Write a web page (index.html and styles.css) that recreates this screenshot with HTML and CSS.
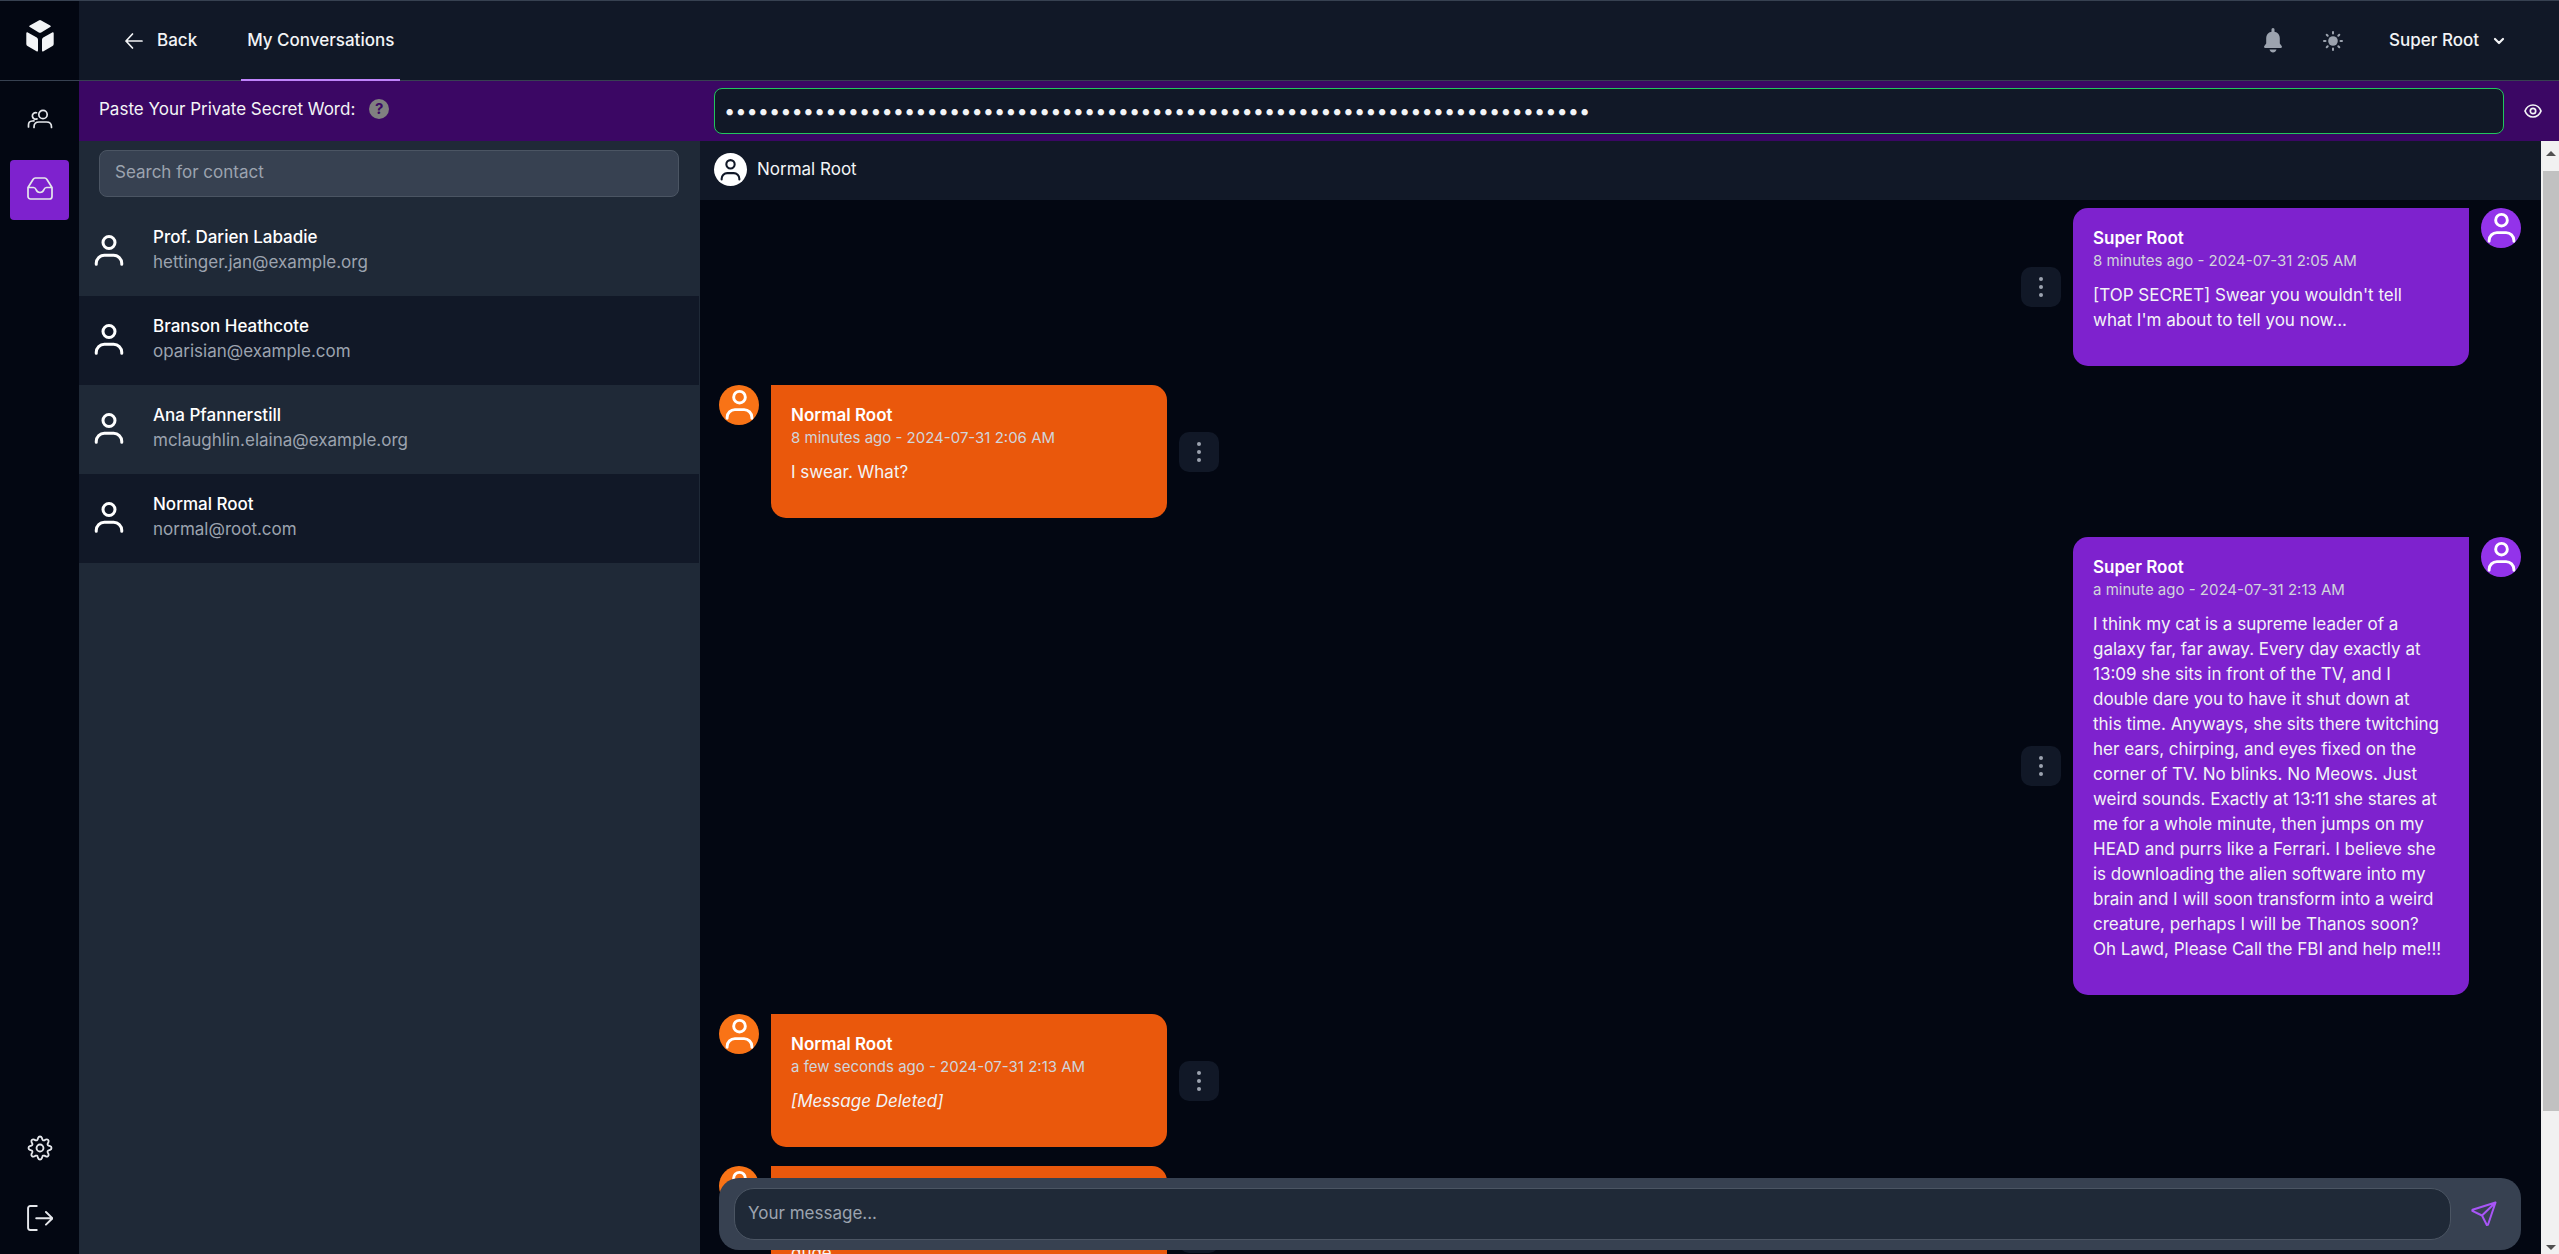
FILE: index.html
```html
<!DOCTYPE html>
<html lang="en">
<head>
<meta charset="utf-8">
<title>My Conversations</title>
<link rel="stylesheet" href="styles.css">
</head>
<body>
<svg class="sprite" aria-hidden="true">
  <symbol id="person" viewBox="0 0 24 24"><g fill="none" stroke="currentColor" stroke-width="2" stroke-linecap="round"><circle cx="12" cy="7" r="4"/><path d="M3.5 21.5v-.6A5.400 5.400 0 0 1 9 15.500h6a5.400 5.400 0 0 1 5.500 5.400v.6"/></g></symbol>
  <symbol id="dots" viewBox="0 0 24 24"><g fill="currentColor"><circle cx="12" cy="4" r="2"/><circle cx="12" cy="12" r="2"/><circle cx="12" cy="20" r="2"/></g></symbol>
</svg>
<div class="app">
  <nav class="rail" aria-label="Main">
    <a class="logo" href="#" aria-label="Home"><svg width="28" height="32" viewBox="0 0 28 32" fill="currentColor"><path d="M12.800.4a2.400 2.400 0 0 1 2.400 0l9 5.200c.8.500.8 1 0 1.500l-9 5.300c-.8.400-1.600.400-2.400 0l-9-5.300c-.8-.500-.8-1 0-1.500zM.3 13.200c0-1 .7-1.300 1.500-.8l9 5.200c.8.500 1.200 1.200 1.200 2.100v10.600c0 1.200-.7 1.500-1.500 1L1.500 26A2.400 2.400 0 0 1 .3 24zM27.700 13.200c0-1-.7-1.300-1.500-.8l-9 5.200c-.8.500-1.200 1.200-1.200 2.100v10.600c0 1.200.7 1.500 1.500 1l9-5.300a2.400 2.400 0 0 0 1.200-2z"/></svg></a>
    <div class="rail-links">
      <a class="rail-link" href="#" aria-label="Contacts"><svg width="26" height="20" viewBox="0 0 26 20" fill="none" stroke="currentColor" stroke-width="1.700" stroke-linecap="round"><circle cx="16" cy="5.500" r="4.200"/><path d="M7 18.500V18c0-3 2-5 5-5h7.500c3 0 5 2 5 5v.5M9.500 3.700A3.300 3.300 0 1 0 10 9.900M1.500 18v-2c0-2.300 1.500-3.900 3.700-4l1.800-.1"/></svg></a>
      <a class="rail-link active" href="#" aria-label="Conversations"><svg width="26" height="23" viewBox="0 0 26 23" fill="none" stroke="currentColor" stroke-width="1.700" stroke-linejoin="round"><path d="M1 10.500v9A2.500 2.500 0 0 0 3.500 22h19a2.500 2.500 0 0 0 2.500-2.500v-9l-5.200-8.200A2.500 2.500 0 0 0 17.700 1H8.300a2.500 2.500 0 0 0-2.100 1.300zh5.500c1.500 0 2 .8 2.500 2 .7 2 1.800 3 4 3s3.300-1 4-3c.5-1.200 1-2 2.500-2H25"/></svg></a>
    </div>
    <div class="rail-links bottom">
      <a class="rail-link" href="#" aria-label="Settings"><svg width="26" height="26" viewBox="0 0 24 24" fill="none" stroke="currentColor" stroke-width="1.700" stroke-linejoin="round"><circle cx="12" cy="12" r="3.200"/><path d="M10.300 2.600a1.800 1.800 0 0 1 3.400 0l.5 1.500a1.300 1.300 0 0 0 1.800.8l1.400-.7a1.800 1.800 0 0 1 2.400 2.400l-.7 1.400a1.300 1.300 0 0 0 .8 1.800l1.500.5a1.800 1.800 0 0 1 0 3.400l-1.500.5a1.300 1.300 0 0 0-.8 1.800l.7 1.400a1.800 1.800 0 0 1-2.400 2.400l-1.400-.7a1.300 1.300 0 0 0-1.800.8l-.5 1.500a1.800 1.800 0 0 1-3.400 0l-.5-1.500a1.300 1.300 0 0 0-1.800-.8l-1.400.7a1.800 1.800 0 0 1-2.400-2.400l.7-1.400a1.300 1.300 0 0 0-.8-1.800l-1.500-.5a1.800 1.800 0 0 1 0-3.400l1.500-.5a1.300 1.300 0 0 0 .8-1.800l-.7-1.400a1.800 1.800 0 0 1 2.400-2.400l1.400.7a1.300 1.300 0 0 0 1.800-.8z"/></svg></a>
      <a class="rail-link" href="#" aria-label="Log out"><svg width="26" height="26" viewBox="0 0 24 24" fill="none" stroke="currentColor" stroke-width="1.800" stroke-linecap="round" stroke-linejoin="round"><path d="M9 1H3a2 2 0 0 0-2 2v18a2 2 0 0 0 2 2h6M8.500 12.300H23.500M17.500 6.500l6 5.800-6 5.800"/></svg></a>
    </div>
  </nav>
  <div class="main">
    <header class="topbar">
      <nav class="tabs" aria-label="Section">
        <a class="tab" href="#"><svg width="20" height="20" viewBox="0 0 20 20" fill="none" stroke="currentColor" stroke-width="1.700" stroke-linecap="round" stroke-linejoin="round"><path d="M18 10H2M8.500 3L2 10l6.500 7"/></svg>Back</a>
        <a class="tab current" href="#">My Conversations</a>
      </nav>
      <div class="tools">
        <button class="icon-btn" aria-label="Notifications"><svg width="20" height="25" viewBox="0 0 20 25" fill="currentColor"><path d="M10 0c1 0 1.500.8 1.500 1.700v2c3.500.7 5.300 3.300 5.300 6.300v5.500l1.900 2.500c.5.700.2 2-.8 2H2.100c-1 0-1.300-1.300-.8-2l1.900-2.500V10c0-3 1.800-5.600 5.300-6.300v-2C8.500.8 9 0 10 0zM6.500 21.500h7c-.5 2-2 3-3.500 3s-3-1-3.500-3z"/></svg></button>
        <button class="icon-btn" aria-label="Toggle theme"><svg width="20" height="20" viewBox="0 0 20 20" fill="none" stroke="currentColor" stroke-width="2" stroke-linecap="round"><circle cx="10" cy="10" r="4.800" fill="currentColor" stroke="none"/><path d="M10 1v1.500M10 17.500V19M1 10h1.500M17.500 10H19M3.700 3.700l1 1M15.300 15.300l1 1M3.700 16.300l1-1M15.300 4.700l1-1"/></svg></button>
        <button class="user-btn">Super Root<svg width="20" height="20" viewBox="0 0 20 20" fill="none" stroke="currentColor" stroke-width="2.200" stroke-linecap="round" stroke-linejoin="round"><path d="M6 8l4 4 4-4"/></svg></button>
      </div>
    </header>
    <form class="secret">
      <div class="secret-label"><label for="secret">Paste Your Private Secret Word:</label><span class="help">?</span></div>
      <input class="secret-input" id="secret" type="password" value="12345678901234567890123456789012345678901234567890123456789012345678901234567">
      <button class="eye" type="button" aria-label="Show secret"><svg width="18" height="14" viewBox="0 0 18 14" fill="none" stroke="currentColor" stroke-width="1.700"><path d="M1 7c1.500-3.800 4.500-6 8-6s6.500 2.200 8 6c-1.500 3.800-4.500 6-8 6s-6.500-2.200-8-6z"/><circle cx="9" cy="7" r="2.700"/></svg></button>
    </form>
    <div class="content">
      <aside class="contacts">
        <div class="search"><input class="search-input" type="text" placeholder="Search for contact" aria-label="Search for contact"></div>
        <ul class="contact-list">
          <li><a class="contact" href="#"><svg class="contact-icon"><use href="#person"/></svg><span><span class="name">Prof. Darien Labadie</span><span class="email">hettinger.jan@example.org</span></span></a></li>
          <li><a class="contact" href="#"><svg class="contact-icon"><use href="#person"/></svg><span><span class="name">Branson Heathcote</span><span class="email">oparisian@example.com</span></span></a></li>
          <li><a class="contact" href="#"><svg class="contact-icon"><use href="#person"/></svg><span><span class="name">Ana Pfannerstill</span><span class="email">mclaughlin.elaina@example.org</span></span></a></li>
          <li><a class="contact" href="#"><svg class="contact-icon"><use href="#person"/></svg><span><span class="name">Normal Root</span><span class="email">normal@root.com</span></span></a></li>
        </ul>
      </aside>
      <section class="chat">
        <header class="chat-head"><span class="peer"><svg><use href="#person"/></svg></span>Normal Root</header>
        <div class="messages">
          <article class="message mine"><span class="avatar"><svg><use href="#person"/></svg></span><div class="bubble"><h3>Super Root</h3><time>8 minutes ago - 2024-07-31 2:05 AM</time><p>[TOP SECRET] Swear you wouldn't tell what I'm about to tell you now...</p></div><button class="more" aria-label="Message options"><svg><use href="#dots"/></svg></button></article>
          <article class="message"><span class="avatar"><svg><use href="#person"/></svg></span><div class="bubble"><h3>Normal Root</h3><time>8 minutes ago - 2024-07-31 2:06 AM</time><p>I swear. What?</p></div><button class="more" aria-label="Message options"><svg><use href="#dots"/></svg></button></article>
          <article class="message mine"><span class="avatar"><svg><use href="#person"/></svg></span><div class="bubble"><h3>Super Root</h3><time>a minute ago - 2024-07-31 2:13 AM</time><p>I think my cat is a supreme leader of a galaxy far, far away. Every day exactly at 13:09 she sits in front of the TV, and I double dare you to have it shut down at this time. Anyways, she sits there twitching her ears, chirping, and eyes fixed on the corner of TV. No blinks. No Meows. Just weird sounds. Exactly at 13:11 she stares at me for a whole minute, then jumps on my HEAD and purrs like a Ferrari. I believe she is downloading the alien software into my brain and I will soon transform into a weird creature, perhaps I will be Thanos soon? Oh Lawd, Please Call the FBI and help me!!!</p></div><button class="more" aria-label="Message options"><svg><use href="#dots"/></svg></button></article>
          <article class="message"><span class="avatar"><svg><use href="#person"/></svg></span><div class="bubble"><h3>Normal Root</h3><time>a few seconds ago - 2024-07-31 2:13 AM</time><p><em>[Message Deleted]</em></p></div><button class="more" aria-label="Message options"><svg><use href="#dots"/></svg></button></article>
          <article class="message"><span class="avatar"><svg><use href="#person"/></svg></span><div class="bubble"><h3>Normal Root</h3><time>a few seconds ago - 2024-07-31 2:13 AM</time><p>dude</p></div><button class="more" aria-label="Message options"><svg><use href="#dots"/></svg></button></article>
        </div>
        <form class="composer">
          <input class="composer-input" type="text" placeholder="Your message..." aria-label="Your message">
          <button class="send" type="button" aria-label="Send"><svg width="26" height="26" viewBox="0 0 26 26" fill="none" stroke="currentColor" stroke-width="2" stroke-linejoin="round" stroke-linecap="round"><path d="M24.500 1.500L1.500 8.800l-.2 1L11 14.500l4.800 9.500 1.200-.2zL11 14.500"/></svg></button>
        </form>
      </section>
      <div class="scrollbar" aria-hidden="true"><span class="arrow up"></span><span class="thumb"></span><span class="track-rest"></span><span class="arrow down"></span></div>
    </div>
  </div>
</div>
</body>
</html>
```
FILE: styles.css
```css
* { box-sizing: border-box; }
body { margin: 0; background: #030712; color: #f3f4f6; font: 17px/25px Inter, "Liberation Sans", sans-serif; }
a { color: inherit; text-decoration: none; }
button { padding: 0; border: 0; background: none; color: inherit; font: inherit; cursor: pointer; }
input { font: inherit; color: inherit; outline: 0; min-width: 0; }
input::placeholder { color: #9ca3af; opacity: 1; }
ul { margin: 0; padding: 0; list-style: none; }
svg { display: block; flex: none; }
.sprite { position: absolute; width: 0; height: 0; }

.app { display: flex; height: 100vh; overflow: hidden; border-top: 1px solid #374151; }
.rail { flex: none; width: 79px; display: flex; flex-direction: column; }
.logo { display: flex; justify-content: center; height: 80px; padding-top: 19px; border-bottom: 1px solid #374151; }
.rail-links { display: flex; flex-direction: column; align-items: center; gap: 10px; padding-top: 9px; }
.rail-links.bottom { margin-top: auto; padding-bottom: 5px; }
.rail-link { display: flex; align-items: center; justify-content: center; width: 59px; height: 60px; padding-bottom: 3px; border-radius: 4px; color: #e5e7eb; }
.rail-link.active { background: #7e22ce; }

.main { flex: 1; min-width: 0; display: flex; flex-direction: column; }
.topbar { flex: none; display: flex; justify-content: space-between; height: 80px; padding: 0 50px 0 39px; background: #111827; border-bottom: 1px solid #374151; }
.tabs { display: flex; gap: 38px; margin-bottom: -1px; }
.tab { display: flex; align-items: center; gap: 13px; padding: 1px 6px 0; border-bottom: 2px solid transparent; font-weight: 500; }
.tab.current { border-color: #c084fc; }
.tools { display: flex; align-items: center; }
.icon-btn { display: flex; align-items: center; justify-content: center; width: 60px; height: 60px; color: #9ca3af; }
.user-btn { display: flex; align-items: center; gap: 10px; padding-left: 26px; font-weight: 500; }

.secret { flex: none; display: flex; align-items: center; height: 60px; padding: 0 17px 0 20px; background: #3b0764; }
.secret-label { flex: none; width: 615px; display: flex; align-items: center; gap: 14px; padding-bottom: 4px; }
.help { width: 20px; height: 20px; border-radius: 50%; background: #808080; color: #3b0764; font-size: 15px; line-height: 20px; font-weight: 700; text-align: center; }
.secret-input { flex: 1; height: 46px; padding: 0 9px; background: #111827; border: 1px solid #22c55e; border-radius: 8px; font-size: 20px; }
.eye { margin-left: 20px; }

.content { flex: 1; min-height: 0; display: flex; }
.contacts { flex: none; width: 621px; background: #1f2937; border-right: 1px solid #1f2937; }
.search { padding: 9px 20px 10px; }
.search-input { display: block; width: 100%; height: 47px; padding: 0 15px 3px; background: #374151; border: 1px solid #4b5563; border-radius: 8px; }
.contact { display: flex; align-items: center; gap: 26px; height: 89px; padding: 0 12px 3px; }
li:nth-child(even) .contact { background: #111827; }
.contact-icon { width: 36px; height: 36px; color: #fff; }
.name, .email { display: block; }
.name { color: #fff; font-weight: 500; }
.email { color: #9ca3af; }

.chat { flex: 1; min-width: 0; display: flex; flex-direction: column; position: relative; overflow: hidden; }
.chat-head { flex: none; display: flex; align-items: center; gap: 10px; height: 59px; padding: 0 14px 2px; background: #111827; }
.peer { display: flex; align-items: center; justify-content: center; width: 33px; height: 33px; border-radius: 50%; background: #fff; color: #111827; }
.peer svg { width: 25px; height: 25px; }
.messages { flex: 1; min-height: 0; overflow: hidden; display: flex; flex-direction: column; gap: 19px; padding: 8px 20px 0 19px; }
.message { flex: none; display: flex; align-items: center; gap: 12px; }
.message.mine { flex-direction: row-reverse; }
.avatar { align-self: flex-start; display: flex; justify-content: center; width: 40px; height: 40px; padding-top: 2px; border-radius: 50%; background: #f97316; color: #fff; }
.mine .avatar { background: #9333ea; }
.avatar svg { width: 35px; height: 35px; }
.bubble { width: 396px; padding: 18px 26px 33px 20px; border-radius: 0 15px 15px 15px; background: #ea580c; }
.mine .bubble { border-radius: 15px 0 15px 15px; background: #7e22ce; }
.bubble h3 { margin: 0; color: #fff; font: inherit; font-weight: 600; }
.bubble time { display: block; color: #d1d5db; font-size: 15px; line-height: 20px; }
.bubble p { margin: 12px 0 0; }
.more { display: flex; align-items: center; justify-content: center; width: 40px; height: 40px; border-radius: 10px; background: #111827; color: #9ca3af; }
.more svg { width: 24px; height: 24px; }

.composer { position: absolute; left: 19px; right: 20px; bottom: 4px; display: flex; align-items: center; height: 72px; padding: 0 24px 0 15px; border-radius: 20px; background: #374151; }
.composer-input { flex: 1; height: 52px; padding: 0 13px 2px; border: 1px solid #4b5563; border-radius: 20px; background: #1f2937; }
.send { margin-left: 20px; color: #a855f7; }

.scrollbar { flex: none; width: 18px; display: flex; flex-direction: column; align-items: center; padding: 10px 0 4px 2px; background: #f1f1f1; }
.arrow { border: 5px solid transparent; }
.arrow.up { border-top-width: 0; border-bottom-color: #505050; }
.arrow.down { border-bottom-width: 0; border-top-color: #505050; }
.thumb { flex: 7; width: 100%; margin-top: 15px; background: #c1c1c1; }
.track-rest { flex: 1; }
```
